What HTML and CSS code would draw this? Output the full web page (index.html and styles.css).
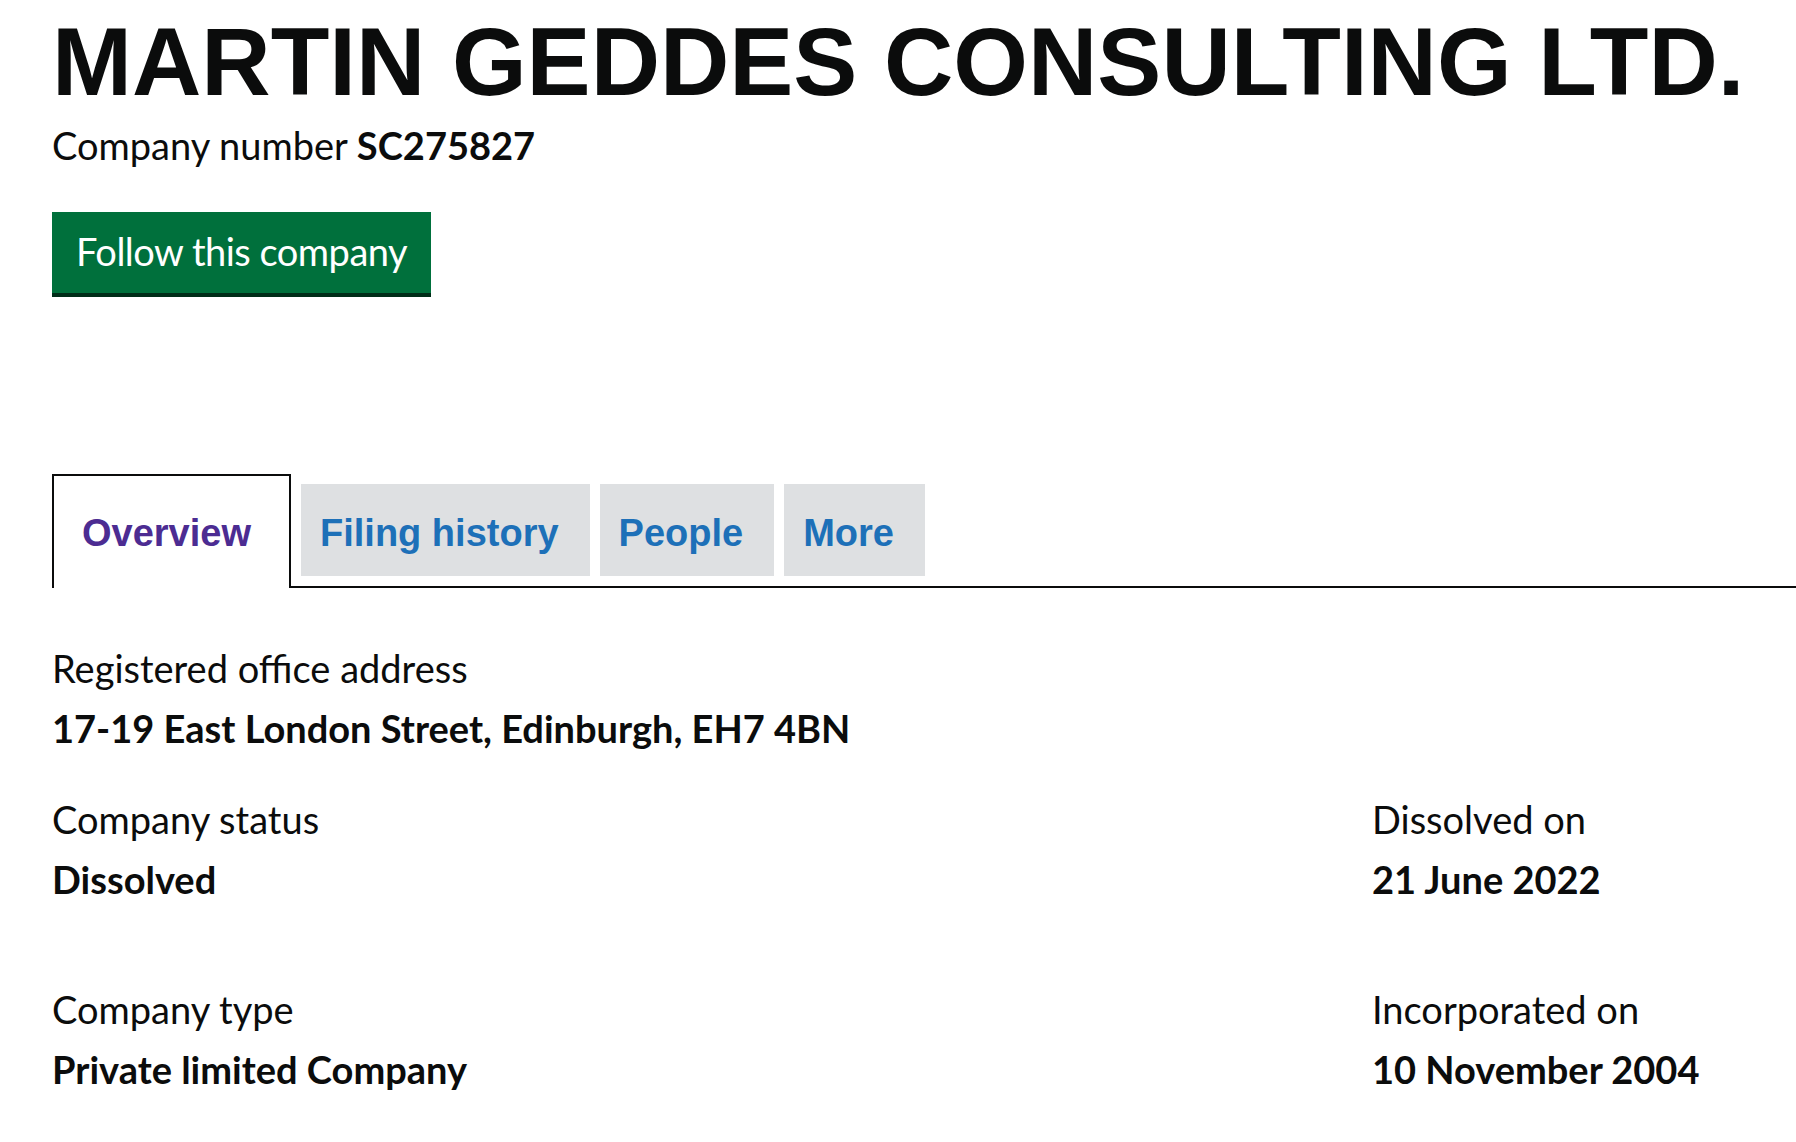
FILE: index.html
```html
<!DOCTYPE html>
<html lang="en">
<head>
<meta charset="utf-8">
<title>MARTIN GEDDES CONSULTING LTD. - Overview</title>
<link rel="stylesheet" href="styles.css">
</head>
<body>
<main class="page">
  <h1 class="title">MARTIN GEDDES CONSULTING LTD.</h1>
  <p class="company-number">Company number <strong>SC275827</strong></p>
  <div class="actions">
    <a class="button" href="#">Follow this company</a>
  </div>

  <ul class="tabs">
    <li class="tab tab-selected"><a href="#">Overview</a></li>
    <li class="tab"><a href="#">Filing history</a></li>
    <li class="tab"><a href="#">People</a></li>
    <li class="tab"><a href="#">More</a></li>
  </ul>

  <dl class="field field-address">
    <dt>Registered office address</dt>
    <dd>17-19 East London Street, Edinburgh, EH7 4BN</dd>
  </dl>

  <div class="row row-status">
    <dl class="field col-three-quarters">
      <dt>Company status</dt>
      <dd>Dissolved</dd>
    </dl>
    <dl class="field col-quarter">
      <dt>Dissolved on</dt>
      <dd>21 June 2022</dd>
    </dl>
  </div>

  <div class="row row-type">
    <dl class="field col-three-quarters">
      <dt>Company type</dt>
      <dd>Private limited Company</dd>
    </dl>
    <dl class="field col-quarter">
      <dt>Incorporated on</dt>
      <dd>10 November 2004</dd>
    </dl>
  </div>
</main>
</body>
</html>
```

FILE: styles.css
```css
html, body {
  margin: 0;
  padding: 0;
  background: #ffffff;
}

body {
  color: #0b0c0c;
  font-family: Lato, "Liberation Sans", Arial, sans-serif;
  font-size: 38px;
  line-height: 50px;
}

.page {
  padding: 0 52px;
}

.title {
  margin: 12px 0 0;
  font-family: "Liberation Sans", Arial, sans-serif;
  font-weight: 700;
  font-size: 96px;
  line-height: 100px;
  white-space: nowrap;
}

.company-number {
  margin: 8px 0 0;
}

.company-number strong {
  font-weight: 700;
}

.actions {
  margin-top: 42px;
}

.button {
  display: inline-block;
  box-sizing: border-box;
  border: 4px solid transparent;
  padding: 14px 20px 16px;
  background: #00703c;
  box-shadow: 0 4px 0 #002d18;
  color: #ffffff;
  text-decoration: none;
  font-size: 38px;
  line-height: 43px;
  letter-spacing: -0.5px;
}

.tabs {
  display: flex;
  align-items: flex-end;
  list-style: none;
  margin: 181px -52px 0 0;
  padding: 0;
  border-bottom: 2px solid #0b0c0c;
}

.tab {
  margin: 0 10px 10px 0;
  padding: 27px 31px 21px 19px;
  background: #dee0e2;
  font-family: "Liberation Sans", Arial, sans-serif;
  font-weight: 700;
  font-size: 38px;
  line-height: 44px;
}

.tab a {
  color: #1d70b8;
  text-decoration: none;
}

.tab-selected {
  margin-bottom: -2px;
  padding: 35px 38px 33px 28px;
  border: 2px solid #0b0c0c;
  border-bottom: 0;
  background: #ffffff;
}

.tab-selected a {
  color: #4c2c92;
}

.field {
  margin: 0;
}

.field dt {
  margin: 0;
  font-weight: 400;
}

.field dd {
  margin: 10px 0 0;
  font-weight: 700;
}

.field-address {
  margin-top: 55px;
}

.row {
  display: flex;
  margin: 0 -30px;
}

.row-status {
  margin-top: 41px;
}

.row-type {
  margin-top: 80px;
}

.col-three-quarters,
.col-quarter {
  box-sizing: border-box;
  padding: 0 30px;
}

.col-three-quarters {
  width: 75%;
}

.col-quarter {
  width: 25%;
  padding-left: 36px;
}
```
